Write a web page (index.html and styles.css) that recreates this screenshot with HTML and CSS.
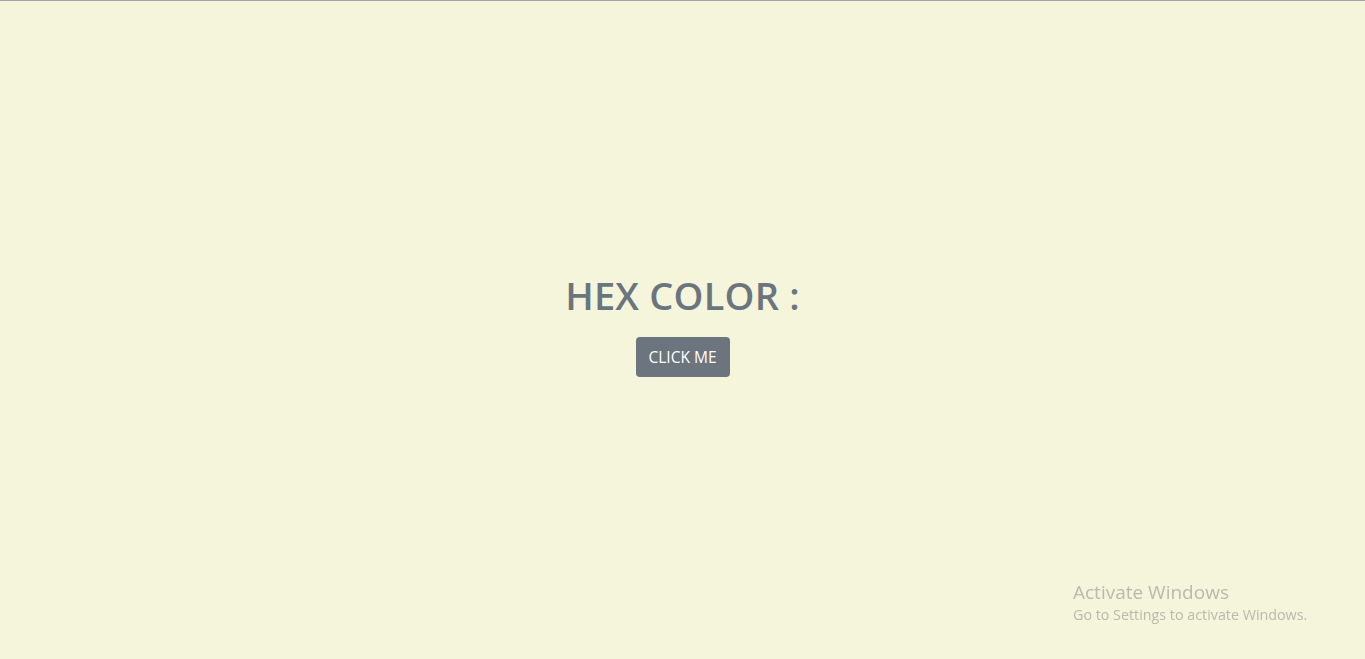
FILE: index.html
```html
<!DOCTYPE html>
<html lang="en">
<head>
<meta charset="utf-8">
<title>Hex Color</title>
<link rel="stylesheet" href="styles.css">
</head>
<body>
<main class="stage">
  <h1 class="title">HEX COLOR :</h1>
  <button class="btn" type="button">CLICK ME</button>
</main>
<div class="watermark">
  <div class="wm-title">Activate Windows</div>
  <div class="wm-sub">Go to Settings to activate Windows.</div>
</div>
</body>
</html>
```
FILE: styles.css
```css
html, body {
  margin: 0;
  padding: 0;
  height: 100%;
}
body {
  background: #f5f5dc;
  font-family: "Open Sans", "Noto Sans", sans-serif;
  border-top: 1px solid #a3a3a8;
  box-sizing: border-box;
}
.stage {
  height: 100%;
  display: flex;
  flex-direction: column;
  align-items: center;
  justify-content: center;
  padding-bottom: 10px;
  box-sizing: border-box;
}
.title {
  margin: 0 0 18px;
  font-size: 38px;
  font-weight: 600;
  color: #6c757d;
  line-height: 1.2;
  letter-spacing: 0.2px;
}
.btn {
  background: #6c757d;
  color: #fff;
  border: none;
  border-radius: 4px;
  font-family: "Open Sans", "Noto Sans", sans-serif;
  font-size: 15.5px;
  width: 94px;
  height: 40px;
  padding: 0;
  cursor: pointer;
}
.watermark {
  position: fixed;
  left: 1073px;
  top: 580px;
  color: #b9b9ae;
  font-family: "Open Sans", "Noto Sans", sans-serif;
}
.wm-title {
  font-size: 19px;
  line-height: 24px;
}
.wm-sub {
  font-size: 14.3px;
  line-height: 22px;
}
```
